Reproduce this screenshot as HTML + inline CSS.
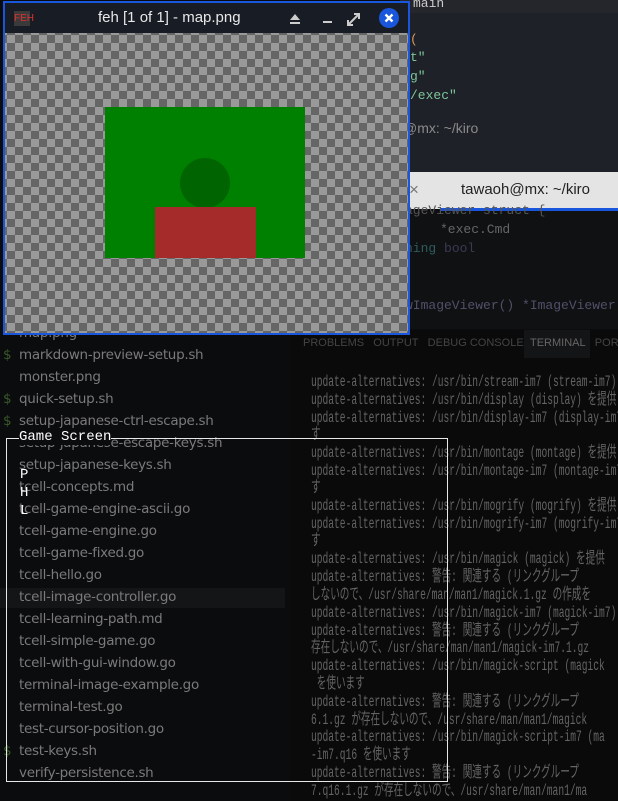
<!DOCTYPE html>
<html><head><meta charset="utf-8"><style>
*{margin:0;padding:0;box-sizing:border-box}
body{width:618px;height:801px;overflow:hidden;background:#0b0c0e;position:relative;font-family:"Liberation Sans","Noto Sans CJK JP",sans-serif}
.a{position:absolute;white-space:nowrap}
.files div{position:absolute;left:19px;font-size:13.5px;color:#7a7a7a;font-family:"DejaVu Sans","Liberation Sans",sans-serif;letter-spacing:-0.3px;white-space:nowrap}
.term div{position:absolute;left:311px;font-family:"Liberation Mono","Noto Sans CJK JP",monospace;font-size:16px;line-height:18px;height:18px;color:#646464;white-space:nowrap;transform:scaleX(0.6);transform-origin:0 0}
.code{font-family:"Liberation Mono",monospace;font-size:13px}
</style></head><body>
<!-- top right editor -->
<div class="a" style="left:400px;top:0;width:218px;height:13px;background:#24262c"></div>
<div class="a" style="left:400px;top:13px;width:218px;height:160px;background:#1e2128"></div>
<div class="a code" style="left:413px;top:-4px;color:#ccc">main</div>
<div class="a code" style="left:410px;top:32px;color:#d19a66">(</div>
<div class="a code" style="left:410px;top:50px;color:#7ec699">t"</div>
<div class="a code" style="left:410px;top:69px;color:#7ec699">g"</div>
<div class="a code" style="left:410px;top:88px;color:#7ec699">/exec"</div>
<div class="a" style="left:403px;top:120px;font-size:14px;color:#8a8a8a">@mx: ~/kiro</div>
<!-- light tab -->
<div class="a" style="left:400px;top:172px;width:218px;height:37px;background:#e4e4e4"></div>
<div class="a" style="left:440px;top:208px;width:178px;height:3px;background:#1a56db"></div>
<div class="a" style="left:409px;top:180px;font-size:17px;color:#777">×</div>
<div class="a" style="left:461px;top:181px;font-size:15px;color:#222">tawaoh@mx: ~/kiro</div>
<!-- lower editor -->
<div class="a" style="left:400px;top:211px;width:218px;height:118px;background:#101113"></div>
<div class="a code" style="left:405px;top:203px;color:#555">ageViewer struct {</div>
<div class="a code" style="left:440px;top:222px;color:#666">*exec.Cmd</div>
<div class="a code" style="left:405px;top:241px;color:#2f5c5c">ning <span style="color:#3a3a55">bool</span></div>
<div class="a code" style="left:405px;top:298px;color:#50506a">wImageViewer() *ImageViewer {</div>
<div class="a" style="left:290px;top:330px;width:328px;height:471px;background:#0a0a0b"></div>
<div class="a" style="left:303px;top:337px;font-size:11px;color:#444">PROBLEMS&nbsp;&nbsp;&nbsp;OUTPUT&nbsp;&nbsp;&nbsp;DEBUG CONSOLE</div>
<div class="a" style="left:524px;top:330px;width:66px;height:28px;background:#141516"></div>
<div class="a" style="left:530px;top:337px;font-size:11px;color:#666">TERMINAL&nbsp;&nbsp;&nbsp;<span style="color:#444">PORTS</span></div>
<div class="term">
<div style="top:373px">update-alternatives: /usr/bin/stream-im7 (stream-im7)</div>
<div style="top:391px">update-alternatives: /usr/bin/display (display) を提供</div>
<div style="top:409px">update-alternatives: /usr/bin/display-im7 (display-im7)</div>
<div style="top:426px">す</div>
<div style="top:444px">update-alternatives: /usr/bin/montage (montage) を提供</div>
<div style="top:462px">update-alternatives: /usr/bin/montage-im7 (montage-im7)</div>
<div style="top:479px">す</div>
<div style="top:497px">update-alternatives: /usr/bin/mogrify (mogrify) を提供</div>
<div style="top:515px">update-alternatives: /usr/bin/mogrify-im7 (mogrify-im7)</div>
<div style="top:532px">す</div>
<div style="top:550px">update-alternatives: /usr/bin/magick (magick) を提供</div>
<div style="top:568px">update-alternatives: 警告: 関連する (リンクグループ</div>
<div style="top:586px">しないので、/usr/share/man/man1/magick.1.gz の作成を</div>
<div style="top:604px">update-alternatives: /usr/bin/magick-im7 (magick-im7)</div>
<div style="top:622px">update-alternatives: 警告: 関連する (リンクグループ</div>
<div style="top:639px">存在しないので、/usr/share/man/man1/magick-im7.1.gz</div>
<div style="top:657px">update-alternatives: /usr/bin/magick-script (magick</div>
<div style="top:675px">&nbsp;を使います</div>
<div style="top:693px">update-alternatives: 警告: 関連する (リンクグループ</div>
<div style="top:711px">6.1.gz が存在しないので、/usr/share/man/man1/magick</div>
<div style="top:728px">update-alternatives: /usr/bin/magick-script-im7 (ma</div>
<div style="top:746px">-im7.q16 を使います</div>
<div style="top:764px">update-alternatives: 警告: 関連する (リンクグループ</div>
<div style="top:782px">7.q16.1.gz が存在しないので、/usr/share/man/man1/ma</div>
</div>
<!-- explorer -->
<div class="a" style="left:0;top:588px;width:285px;height:20px;background:#141517"></div>
<div class="files">
<div style="top:325px">map.png</div>
<div style="top:347px"><span style="color:#3a5a2a;position:absolute;left:-16px">$</span>markdown-preview-setup.sh</div>
<div style="top:369px">monster.png</div>
<div style="top:391px"><span style="color:#3a5a2a;position:absolute;left:-16px">$</span>quick-setup.sh</div>
<div style="top:413px"><span style="color:#3a5a2a;position:absolute;left:-16px">$</span>setup-japanese-ctrl-escape.sh</div>
<div style="top:435px">setup-japanese-escape-keys.sh</div>
<div style="top:457px">setup-japanese-keys.sh</div>
<div style="top:479px">tcell-concepts.md</div>
<div style="top:501px">tcell-game-engine-ascii.go</div>
<div style="top:523px">tcell-game-engine.go</div>
<div style="top:545px">tcell-game-fixed.go</div>
<div style="top:567px">tcell-hello.go</div>
<div style="top:589px">tcell-image-controller.go</div>
<div style="top:611px">tcell-learning-path.md</div>
<div style="top:633px">tcell-simple-game.go</div>
<div style="top:655px">tcell-with-gui-window.go</div>
<div style="top:677px">terminal-image-example.go</div>
<div style="top:699px">terminal-test.go</div>
<div style="top:721px">test-cursor-position.go</div>
<div style="top:743px"><span style="color:#3a5a2a;position:absolute;left:-16px">$</span>test-keys.sh</div>
<div style="top:765px">verify-persistence.sh</div>
</div>
<!-- game screen box -->
<div class="a" style="left:6px;top:438px;width:442px;height:344px;border:1px solid #e8e8e8"></div>
<div class="a" style="left:19px;top:429px;font-family:'Liberation Mono',monospace;font-size:14px;color:#fff;background:#0b0c0e">Game Screen</div>
<div class="a" style="left:20px;top:466px;font-family:'Liberation Mono',monospace;font-size:14px;color:#fff;line-height:18px">P<br>H<br>L</div>
<!-- feh window -->
<div class="a" style="left:3px;top:1px;width:407px;height:334px;border:2px solid #1a56db;background-color:#999;background-image:linear-gradient(45deg,#666 25%,transparent 25%,transparent 75%,#666 75%),linear-gradient(45deg,#666 25%,transparent 25%,transparent 75%,#666 75%);background-size:16px 16px;background-position:2px 0,10px 8px;overflow:hidden">
<div class="a" style="left:0;top:0;width:403px;height:30px;background:#181c24"></div>
<div class="a" style="left:9px;top:8px;width:16px;height:15px;background:#3a3a3a;color:#e03030;font-size:10px;line-height:15px;text-align:center">FEH</div>
<div class="a" style="left:93px;top:6px;font-size:15px;color:#e8e8e8">feh [1 of 1] - map.png</div>
<svg class="a" style="left:285px;top:8px" width="100" height="20">
<path d="M5 3L10 9H0Z" fill="#ccc"/><rect x="0" y="11" width="10" height="2" fill="#ccc"/>
<rect x="33" y="10" width="9" height="2" fill="#ccc"/>
<path d="M64 3h5v5M63 14h-5v-5M69 3l-10 10" stroke="#ccc" stroke-width="2" fill="none"/>
</svg>
<div class="a" style="left:374px;top:5px;width:20px;height:20px;border-radius:50%;background:#1a56db"></div>
<svg class="a" style="left:374px;top:5px" width="20" height="20"><path d="M6.5 6.5l7 7M13.5 6.5l-7 7" stroke="#fff" stroke-width="2.4"/></svg>
<div class="a" style="left:100px;top:104px;width:200px;height:151px;background:#008000"></div>
<div class="a" style="left:175px;top:155px;width:50px;height:50px;border-radius:50%;background:#006400"></div>
<div class="a" style="left:150px;top:204px;width:101px;height:51px;background:#a52a2a"></div>
</div>
</body></html>
